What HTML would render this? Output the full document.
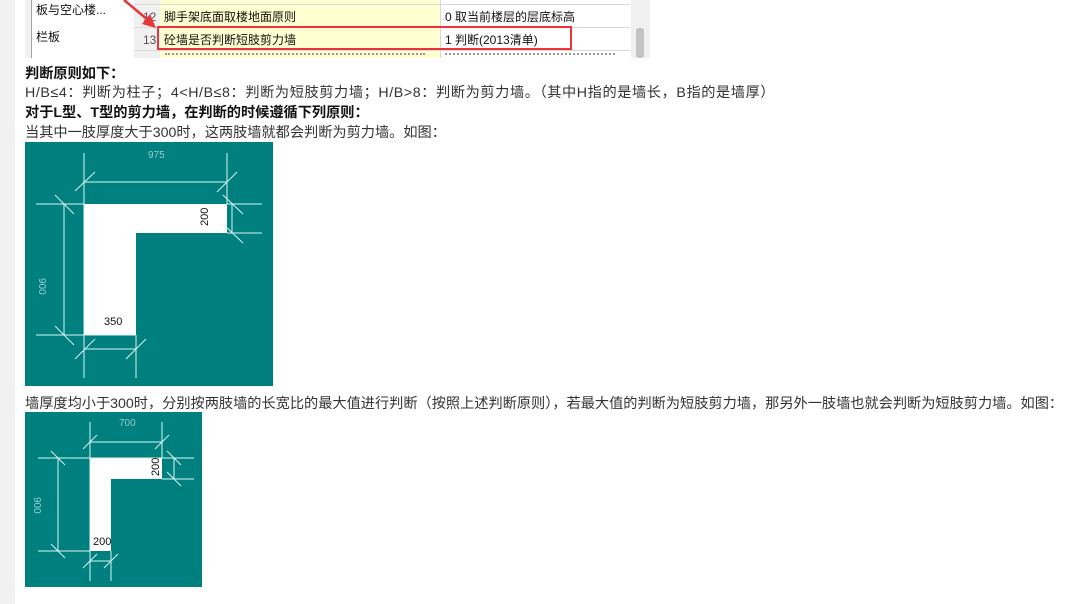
<!DOCTYPE html>
<html><head><meta charset="utf-8"><style>
body{margin:0;width:1090px;height:604px;position:relative;overflow:hidden;background:#fff;font-family:"Liberation Sans","Noto Sans CJK SC",sans-serif;}
.strip{position:absolute;left:0;top:0;width:15px;height:604px;background:#f1f1f1;}
.t{position:absolute;left:25px;font-size:14.2px;color:#333;white-space:nowrap;line-height:16px;}
.b{font-weight:bold;color:#111;}
.c{position:absolute;font-size:12px;color:#111;white-space:nowrap;line-height:14px;}
</style></head><body>
<div class="strip"></div>
<div style="position:absolute;left:25px;top:0;width:625px;height:58px;background:#f0f0f0;overflow:hidden">
 <div style="position:absolute;left:6px;top:0;width:102px;height:58px;background:#fff;border-left:1px solid #a0a0a0;border-right:1px solid #a0a0a0"></div>
 <div style="position:absolute;left:109px;top:0;width:26px;height:58px;background:#f0f0f0;border-right:1px solid #c8c8c8"></div>
 <div style="position:absolute;left:135px;top:0;width:280px;height:58px;background:#ffffd2"></div>
 <div style="position:absolute;left:415px;top:0;width:190px;height:58px;background:#fff;border-left:1px solid #d8d8d8"></div>
 <div style="position:absolute;left:109px;top:4px;width:496px;height:1px;background:#d8d8d8"></div>
 <div style="position:absolute;left:109px;top:27px;width:496px;height:1px;background:#d8d8d8"></div>
 <div style="position:absolute;left:109px;top:50px;width:496px;height:1px;background:#d8d8d8"></div>
 <div style="position:absolute;left:607px;top:0;width:16px;height:58px;background:#f0f0f0"></div>
 <div style="position:absolute;left:611px;top:28px;width:8px;height:30px;background:#c2c2c2;border-radius:3px"></div>
 <div style="position:absolute;left:140px;top:53px;width:260px;height:3px;border-top:2px dotted #999"></div>
 <div style="position:absolute;left:420px;top:53px;width:170px;height:3px;border-top:2px dotted #999"></div>
</div>
<div class="c" style="left:36px;top:3px">板与空心楼...</div>
<div class="c" style="left:36px;top:30px">栏板</div>
<div class="c" style="left:143px;top:10px;color:#555">12</div>
<div class="c" style="left:143px;top:33px;color:#555">13</div>
<div class="c" style="left:164px;top:10px">脚手架底面取楼地面原则</div>
<div class="c" style="left:445px;top:10px">0 取当前楼层的层底标高</div>
<div class="c" style="left:164px;top:33px">砼墙是否判断短肢剪力墙</div>
<div class="c" style="left:445px;top:33px">1 判断(2013清单)</div>
<div style="position:absolute;left:157px;top:26px;width:411px;height:20px;border:2px solid #e8353a"></div>
<svg style="position:absolute;left:120px;top:0" width="40" height="30"><line x1="4" y1="0" x2="28" y2="20" stroke="#e8353a" stroke-width="2.5"/><polygon points="22,24 36,28 30,14" fill="#e8353a"/></svg>

<div class="t b" style="top:66px">判断原则如下：</div>
<div class="t" style="top:85px;letter-spacing:0.6px">H/B≤4：判断为柱子；4&lt;H/B≤8：判断为短肢剪力墙；H/B&gt;8：判断为剪力墙。（其中H指的是墙长，B指的是墙厚）</div>
<div class="t b" style="top:105px">对于L型、T型的剪力墙，在判断的时候遵循下列原则：</div>
<div class="t" style="top:125px">当其中一肢厚度大于300时，这两肢墙就都会判断为剪力墙。如图：</div>

<svg style="position:absolute;left:0;top:0" width="1090" height="604">
<g>
<rect x="25" y="142" width="248" height="244" fill="#007f7f"/>
<polygon points="84,204 227,204 227,233 136,233 136,335 84,335" fill="#fff"/>
<g stroke="#d8f4f4" stroke-width="1" fill="none">
<line x1="84" y1="182" x2="227" y2="182"/><line x1="84" y1="153" x2="84" y2="378"/><line x1="227" y1="153" x2="227" y2="204"/>
<line x1="64" y1="204" x2="64" y2="335"/><line x1="36" y1="204" x2="84" y2="204"/><line x1="227" y1="204" x2="262" y2="204"/><line x1="227" y1="233" x2="262" y2="233"/>
<line x1="36" y1="335" x2="136" y2="335"/><line x1="84" y1="349" x2="136" y2="349"/><line x1="136" y1="335" x2="136" y2="378"/><line x1="232" y1="204" x2="232" y2="233"/>
<line x1="75" y1="191" x2="95" y2="172"/><line x1="217" y1="192" x2="237" y2="172"/>
<line x1="55" y1="195" x2="74" y2="214"/><line x1="55" y1="326" x2="74" y2="345"/>
<line x1="223" y1="195" x2="243" y2="214"/><line x1="223" y1="224" x2="243" y2="243"/>
<line x1="75" y1="359" x2="95" y2="339"/><line x1="126" y1="359" x2="146" y2="339"/>
</g>
<text x="148" y="158" font-size="10" fill="#9cc" font-family="Liberation Sans">975</text>
<text x="104" y="325" font-size="11" fill="#111" font-family="Liberation Sans">350</text>
<text transform="translate(208,226) rotate(-90)" font-size="11" fill="#111" font-family="Liberation Sans">200</text>
<text transform="translate(39,278) rotate(90)" font-size="10" fill="#9cc" font-family="Liberation Sans">900</text>
</g>
<g>
<rect x="25" y="412" width="177" height="175" fill="#007f7f"/>
<polygon points="90,458 162,458 162,479 111,479 111,551 90,551" fill="#fff"/>
<g stroke="#d8f4f4" stroke-width="1" fill="none">
<line x1="90" y1="442" x2="162" y2="442"/><line x1="90" y1="422" x2="90" y2="581"/><line x1="162" y1="422" x2="162" y2="458"/>
<line x1="58" y1="458" x2="58" y2="551"/><line x1="38" y1="458" x2="194" y2="458"/><line x1="162" y1="479" x2="194" y2="479"/>
<line x1="38" y1="551" x2="90" y2="551"/><line x1="90" y1="561" x2="111" y2="561"/><line x1="111" y1="551" x2="111" y2="581"/><line x1="174" y1="458" x2="174" y2="479"/>
<line x1="83" y1="449" x2="97" y2="435"/><line x1="155" y1="449" x2="169" y2="435"/>
<line x1="51" y1="451" x2="65" y2="465"/><line x1="51" y1="544" x2="65" y2="558"/>
<line x1="167" y1="451" x2="181" y2="465"/><line x1="167" y1="472" x2="181" y2="486"/>
<line x1="83" y1="568" x2="97" y2="554"/><line x1="104" y1="568" x2="118" y2="554"/>
</g>
<text x="119" y="426" font-size="10" fill="#9cc" font-family="Liberation Sans">700</text>
<text x="93" y="545" font-size="11" fill="#111" font-family="Liberation Sans">200</text>
<text transform="translate(159,476) rotate(-90)" font-size="11" fill="#111" font-family="Liberation Sans">200</text>
<text transform="translate(34,497) rotate(90)" font-size="10" fill="#9cc" font-family="Liberation Sans">900</text>
</g>
</svg>

<div class="t" style="top:396px">墙厚度均小于300时，分别按两肢墙的长宽比的最大值进行判断（按照上述判断原则），若最大值的判断为短肢剪力墙，那另外一肢墙也就会判断为短肢剪力墙。如图：</div>
</body></html>
